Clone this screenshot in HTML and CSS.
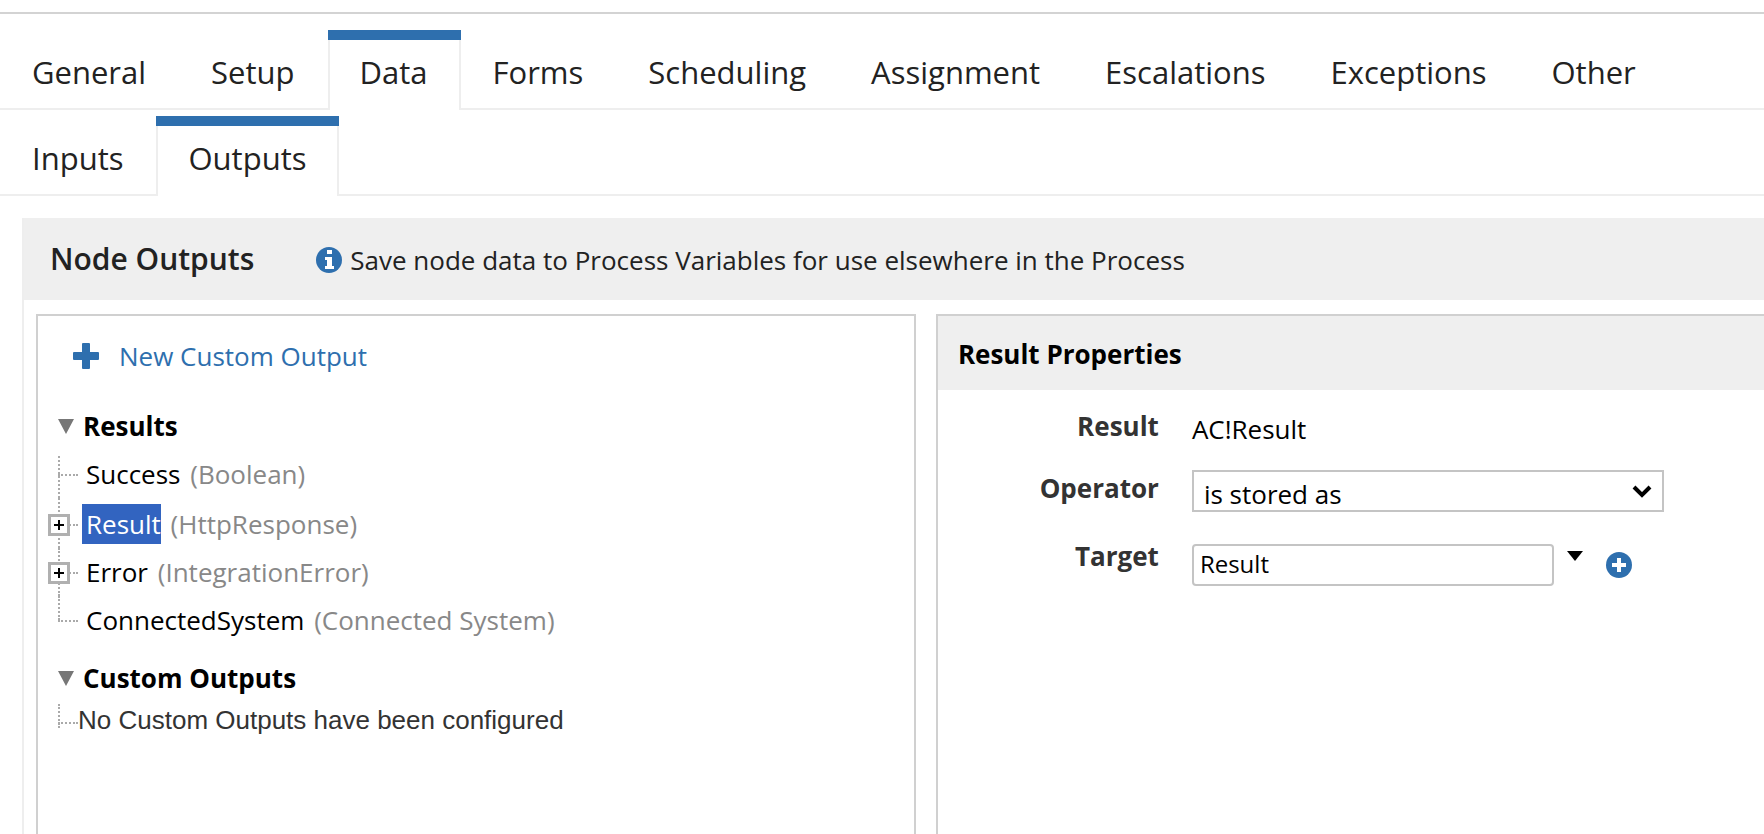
FILE: index.html
```
<!DOCTYPE html>
<html lang="en">
<head>
  <meta charset="UTF-8">
  <title>Node Outputs</title>
  <link rel="stylesheet" href="styles.css">
</head>
<body>
  <nav class="tabs main-tabs">
    <a class="tab" href="#general">General</a>
    <a class="tab" href="#setup">Setup</a>
    <a class="tab active" href="#data">Data</a>
    <a class="tab" href="#forms">Forms</a>
    <a class="tab" href="#scheduling">Scheduling</a>
    <a class="tab" href="#assignment">Assignment</a>
    <a class="tab" href="#escalations">Escalations</a>
    <a class="tab" href="#exceptions">Exceptions</a>
    <a class="tab" href="#other">Other</a>
  </nav>
  <nav class="tabs">
    <a class="tab" href="#inputs">Inputs</a>
    <a class="tab active" href="#outputs">Outputs</a>
  </nav>

  <main class="node">
    <header class="node-header">
      <h1>Node Outputs</h1>
      <p class="hint">
        <svg class="icon" viewBox="0 0 26 26" aria-hidden="true">
          <circle cx="13" cy="13" r="13" fill="#2e6fae"/>
          <path d="M11 3h5v4h-5zM9 10h7v9h2v3H9v-3h2v-6H9z" fill="#fff"/>
        </svg>
        Save node data to Process Variables for use elsewhere in the Process
      </p>
    </header>

    <div class="panels">
      <section class="panel outputs">
        <button class="new-output" type="button">
          <svg class="icon" viewBox="0 0 26 26" aria-hidden="true">
            <path d="M9 1q0-1 1-1h6q1 0 1 1v8h8q1 0 1 1v6q0 1-1 1h-8v8q0 1-1 1h-6q-1 0-1-1v-8H1q-1 0-1-1v-6q0-1 1-1h8z" fill="#2e6fae"/>
          </svg>
          New Custom Output
        </button>

        <h2 class="group">Results</h2>
        <ul class="tree">
          <li><span class="name">Success</span> <span class="type">(Boolean)</span></li>
          <li class="selected"><button class="expand" type="button" aria-label="Expand Result"></button><span class="name">Result</span> <span class="type">(HttpResponse)</span></li>
          <li><button class="expand" type="button" aria-label="Expand Error"></button><span class="name">Error</span> <span class="type">(IntegrationError)</span></li>
          <li><span class="name">ConnectedSystem</span> <span class="type">(Connected System)</span></li>
        </ul>

        <h2 class="group">Custom Outputs</h2>
        <ul class="tree empty">
          <li>No Custom Outputs have been configured</li>
        </ul>
      </section>

      <section class="panel properties">
        <h2 class="panel-title">Result Properties</h2>
        <form class="fields">
          <label for="result">Result</label>
          <output id="result">AC!Result</output>

          <label for="operator">Operator</label>
          <div class="select">
            <select id="operator">
              <option>is stored as</option>
            </select>
            <svg class="chevron" viewBox="0 0 20 14" aria-hidden="true">
              <path d="M2 3l8 8 8-8" fill="none" stroke="#000" stroke-width="4"/>
            </svg>
          </div>

          <label for="target">Target</label>
          <div class="target">
            <input id="target" type="text" value="Result">
            <button class="pick" type="button" aria-label="Choose variable"></button>
            <button class="add" type="button" aria-label="New variable">
              <svg class="icon" viewBox="0 0 26 26" aria-hidden="true">
                <circle cx="13" cy="13" r="13" fill="#2e6fae"/>
                <path d="M11 6h4v5h5v4h-5v5h-4v-5H6v-4h5z" fill="#fff"/>
              </svg>
            </button>
          </div>
        </form>
      </section>
    </div>
  </main>
</body>
</html>
```
FILE: styles.css
```
* {
  box-sizing: border-box;
}
body {
  margin: 0;
  min-height: 100vh;
  padding-top: 12px;
  display: flex;
  flex-direction: column;
  background: #fff;
  color: #222;
  font: 26px/36px "Open Sans", sans-serif;
}
h1, h2, p, ul {
  margin: 0;
  padding: 0;
}
button {
  padding: 0;
  border: none;
  background: none;
  font: inherit;
  cursor: pointer;
}
.icon {
  width: 26px;
  height: 26px;
  flex: none;
}

/* tab rows */
.tabs {
  display: flex;
  padding-top: 6px;
  font-size: 31px;
  line-height: 40px;
}
.main-tabs {
  padding-top: 16px;
  border-top: 2px solid #d3d3d3;
}
.tabs::after {
  content: "";
  flex: 1;
  border-bottom: 2px solid #eee;
}
.tab {
  padding: 22px 33px 16px 32px;
  border-bottom: 2px solid #eee;
  color: #222;
  text-decoration: none;
}
.tab.active {
  position: relative;
  padding: 22px 31px 18px 30px;
  border: solid #eee;
  border-width: 0 2px;
}
.tab.active::before {
  content: "";
  position: absolute;
  top: 0;
  left: -2px;
  right: -2px;
  height: 10px;
  background: #2e6fae;
}

/* node outputs */
.node {
  flex: 1;
  display: flex;
  flex-direction: column;
  margin: 22px 0 0 22px;
  border-left: 2px solid #eee;
}
.node-header {
  display: flex;
  align-items: center;
  gap: 62px;
  height: 82px;
  padding: 0 26px;
  background: #efefef;
}
.node-header h1 {
  font-size: 30px;
  font-weight: 600;
}
.hint {
  display: flex;
  align-items: center;
  gap: 8px;
  padding-top: 2px;
}
.panels {
  flex: 1;
  display: grid;
  grid-template-columns: 17fr 16fr;
  gap: 20px;
  padding: 14px 0 0 12px;
}
.panel {
  border: 2px solid #d0d0d0;
  border-bottom: none;
}

/* outputs tree */
.outputs {
  padding: 22px 0 0 10px;
}
.new-output {
  display: flex;
  align-items: center;
  gap: 20px;
  margin: 0 0 34px 25px;
  color: #2e6fae;
}
.group {
  display: flex;
  align-items: center;
  gap: 9px;
  padding-left: 10px;
  color: #000;
  font-size: 26px;
  font-weight: 700;
}
.group::before {
  content: "";
  border: 8px solid transparent;
  border-top: 15px solid #777;
  border-bottom: none;
}
.tree {
  list-style: none;
  margin: 6px 0 16px 10px;
  color: #000;
}
.tree li {
  position: relative;
  height: 48px;
  padding-left: 28px;
  line-height: 48px;
}
.tree li::before,
.tree li::after {
  content: "";
  position: absolute;
  left: 0;
  top: 0;
  height: 100%;
  border-left: 2px dotted #aaa;
}
.tree li:first-child::before {
  top: 6px;
  height: 42px;
}
.tree li:last-child::before {
  height: 24px;
}
.tree li::after {
  top: 24px;
  width: 20px;
  height: 0;
  border-left: none;
  border-top: 2px dotted #aaa;
}
.tree .type {
  margin-left: 3px;
  color: #888;
}
.tree .selected {
  height: 50px;
  line-height: 52px;
}
.tree .selected::after {
  top: 26px;
}
.selected .name {
  display: inline-block;
  margin-left: -4px;
  padding-left: 4px;
  background: #3264c0;
  color: #fff;
  line-height: 40px;
}
.expand {
  position: absolute;
  z-index: 1;
  left: -10px;
  top: 14px;
  width: 22px;
  height: 22px;
  border: 3px solid #b0b0b0;
  background:
    linear-gradient(#000, #000) center / 10px 2px no-repeat,
    linear-gradient(#000, #000) center / 2px 10px no-repeat,
    #fff;
}
.selected .expand {
  top: 16px;
}
.tree.empty {
  margin-top: 2px;
}
.tree.empty li {
  height: 44px;
  padding-left: 20px;
  color: #333;
  font-family: "Liberation Sans", Arial, sans-serif;
  line-height: 44px;
}

/* result properties */
.properties {
  border-right: none;
}
.panel-title {
  padding: 20px 20px 18px;
  background: #efefef;
  color: #000;
  font-size: 26px;
}
.fields {
  display: grid;
  grid-template-columns: 221px 1fr;
  column-gap: 33px;
  row-gap: 26px;
  padding-top: 18px;
  color: #000;
}
.fields label {
  color: #333;
  font-weight: 700;
  text-align: right;
}
.fields output {
  padding-top: 6px;
  line-height: 30px;
}
.select {
  position: relative;
  max-width: 472px;
}
.select select {
  width: 100%;
  height: 42px;
  padding: 4px 10px 0;
  appearance: none;
  border: 2px solid #c4c4c4;
  border-radius: 0;
  background: #fff;
  color: #000;
  font: inherit;
}
.chevron {
  position: absolute;
  right: 12px;
  top: 14px;
  width: 20px;
  height: 14px;
  pointer-events: none;
}
.target {
  display: flex;
  align-items: flex-start;
  padding-top: 6px;
}
.target input {
  width: 362px;
  height: 42px;
  padding: 0 6px 4px;
  border: 2px solid #c4c4c4;
  border-radius: 4px;
  color: #000;
  font: inherit;
  font-size: 24px;
}
.pick {
  margin: 7px 23px 0 13px;
  border: 8px solid transparent;
  border-top: 10px solid #000;
  border-bottom: none;
}
.add {
  display: flex;
  margin-top: 8px;
}
```
